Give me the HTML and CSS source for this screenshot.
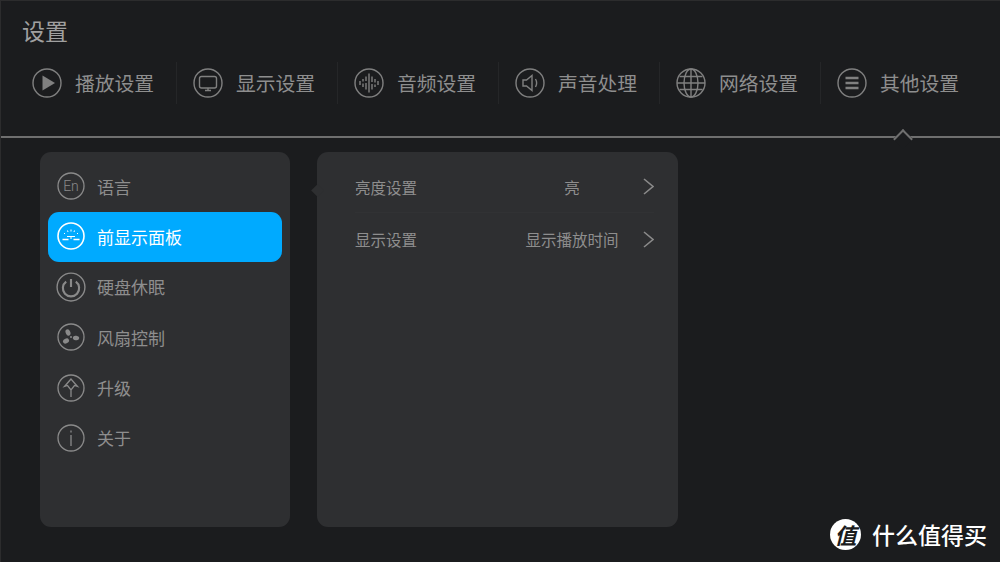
FILE: index.html
```html
<!DOCTYPE html>
<html lang="zh-CN">
<head>
    <meta charset="UTF-8">
    <title>设置</title>
    <link rel="stylesheet" href="styles.css">
</head>
<body>
    <div class="screen">
        <div class="header">
            <h1 class="title">设置</h1>
            <div class="tabs">
                <div class="tab">
                    <svg class="tab-icon" viewBox="0 0 30 30"><circle cx="15" cy="15" r="14"/><path class="solid" d="M10.5 7.5 L23 15 L10.5 22.5 Z"/></svg>
                    <span>播放设置</span>
                </div>
                <div class="tab">
                    <svg class="tab-icon" viewBox="0 0 30 30"><circle cx="15" cy="15" r="14"/><rect x="6.5" y="8.5" width="17" height="11.5" rx="2"/><path d="M12 22.5 H18 M15 20 V22.5"/></svg>
                    <span>显示设置</span>
                </div>
                <div class="tab">
                    <svg class="tab-icon" viewBox="0 0 30 30"><circle cx="15" cy="15" r="14"/><path d="M6 13 V17 M9 11 V13.5 M9 15.5 V19 M12 8.5 V13 M12 15 V21.5 M15 5.5 V24.5 M18 8.5 V14 M18 16 V21.5 M21 11 V14.5 M21 16.5 V19 M24 13 V17"/></svg>
                    <span>音频设置</span>
                </div>
                <div class="tab">
                    <svg class="tab-icon" viewBox="0 0 30 30"><circle cx="15" cy="15" r="14"/><path d="M8 12 H11.5 L17 7.5 V22.5 L11.5 18 H8 Z M20.5 11 Q22.8 15 20.5 19"/></svg>
                    <span>声音处理</span>
                </div>
                <div class="tab">
                    <svg class="tab-icon" viewBox="0 0 30 30"><circle cx="15" cy="15" r="14"/><ellipse cx="15" cy="15" rx="7" ry="14"/><path d="M15 1 V29 M1 15 H29 M3.5 8.5 H26.5 M3.5 21.5 H26.5"/></svg>
                    <span>网络设置</span>
                </div>
                <div class="tab tab-active">
                    <svg class="tab-icon" viewBox="0 0 30 30"><circle cx="15" cy="15" r="14"/><path class="thick" d="M8.5 10 H21.5 M8.5 15 H21.5 M8.5 20 H21.5"/></svg>
                    <span>其他设置</span>
                </div>
            </div>
        </div>

        <div class="content">
            <div class="panel side-menu">
                <div class="menu-item">
                    <svg class="menu-icon" viewBox="0 0 28 28"><circle cx="14" cy="14" r="13"/><text x="14" y="19" class="icon-text">En</text></svg>
                    <span>语言</span>
                </div>
                <div class="menu-item menu-active">
                    <svg class="menu-icon" viewBox="0 0 28 28"><circle cx="14" cy="14" r="13"/><path class="fine" d="M7 11 L8 12 M10.5 8.5 L11 10 M14 7.5 V9.5 M17.5 8.5 L17 10 M21 11 L20 12 M10 14.5 H18 M14 14.5 V17"/><path d="M5.5 17.5 H11.5 M16.5 17.5 H22.5"/></svg>
                    <span>前显示面板</span>
                </div>
                <div class="menu-item">
                    <svg class="menu-icon menu-icon-lg" viewBox="0 0 28 28"><circle cx="14" cy="14" r="13"/><path class="thick" d="M14 6.5 V14 M9.5 9 A7.6 7.6 0 1 0 18.5 9"/></svg>
                    <span>硬盘休眠</span>
                </div>
                <div class="menu-item">
                    <svg class="menu-icon" viewBox="0 0 28 28"><circle cx="14" cy="14" r="13"/><g class="solid"><ellipse cx="11" cy="9.5" rx="2.3" ry="3.2" transform="rotate(-25 11 9.5)"/><ellipse cx="19" cy="15" rx="3.2" ry="2.3" transform="rotate(10 19 15)"/><ellipse cx="9" cy="18" rx="3.2" ry="2.3" transform="rotate(-30 9 18)"/><circle cx="14" cy="14" r="1"/></g></svg>
                    <span>风扇控制</span>
                </div>
                <div class="menu-item">
                    <svg class="menu-icon" viewBox="0 0 28 28"><circle cx="14" cy="14" r="13"/><path d="M14 5 L7.5 12.5 L10.5 11.5 L14 16 L17.5 11.5 L20.5 12.5 Z M14 16 V23"/></svg>
                    <span>升级</span>
                </div>
                <div class="menu-item">
                    <svg class="menu-icon" viewBox="0 0 28 28"><circle cx="14" cy="14" r="13"/><path d="M14 11 V22 M14 6.5 V8.5"/></svg>
                    <span>关于</span>
                </div>
            </div>

            <div class="panel detail">
                <div class="detail-row">
                    <span class="detail-name">亮度设置</span>
                    <span class="detail-value">亮</span>
                    <svg class="chevron" viewBox="0 0 11 17"><path d="M1 1 L10 8.5 L1 16"/></svg>
                </div>
                <div class="detail-row">
                    <span class="detail-name">显示设置</span>
                    <span class="detail-value">显示播放时间</span>
                    <svg class="chevron" viewBox="0 0 11 17"><path d="M1 1 L10 8.5 L1 16"/></svg>
                </div>
            </div>
        </div>

        <!-- watermark -->
        <div class="watermark">
            <span class="wm-logo">值</span>
            <span class="wm-text">什么值得买</span>
        </div>
    </div>
</body>
</html>
```

FILE: styles.css
```css
* {
    box-sizing: border-box;
}

body {
    margin: 0;
    background: #1b1c1e;
    font-family: 'Noto Sans CJK SC', 'Noto Sans', sans-serif;
}

.screen {
    position: relative;
    width: 1000px;
    height: 562px;
    overflow: hidden;
    background: #1b1c1e;
    border-top: 1px solid #2c2c2d;
    border-left: 1px solid #2c2c2d;
    color: #8e8e8e;
}

/* Header */
.header {
    height: 137px;
    padding: 14px 0 0 15px;
    border-bottom: 2px solid #6f6f6f;
}

.title {
    margin: 0 0 0 6px;
    font-size: 23px;
    font-weight: 400;
    line-height: 30px;
    color: #a0a0a0;
}

.tabs {
    display: flex;
    margin-top: 17px;
}

.tab {
    position: relative;
    display: flex;
    align-items: center;
    gap: 13px;
    width: 161px;
    height: 42px;
    padding-left: 16px;
    font-size: 19.8px;
    border-right: 1px solid #252628;
}

.tab span {
    margin-bottom: 2px;
}

.tab:last-child {
    border-right: none;
}

.tab-icon {
    width: 30px;
    height: 30px;
    flex-shrink: 0;
    fill: none;
    stroke: #808080;
    stroke-width: 1.4;
}

.tab-icon .solid {
    fill: #808080;
    stroke: none;
}

.tab-icon .thick {
    stroke-width: 2.4;
}

/* caret on the header line under the active tab */
.tab-active::after {
    content: "";
    position: absolute;
    left: 75px;
    top: 70px;
    width: 12px;
    height: 12px;
    background: #1b1c1e;
    border-top: 2px solid #6f6f6f;
    border-left: 2px solid #6f6f6f;
    transform: rotate(45deg);
}

/* Panels */
.content {
    display: flex;
    gap: 27px;
    padding: 14px 0 0 39px;
}

.panel {
    position: relative;
    height: 375px;
    background: #2e2f31;
    border-radius: 11px;
}

.side-menu {
    width: 250px;
    padding: 10px 8px;
}

.menu-item {
    display: flex;
    align-items: center;
    gap: 12px;
    height: 50px;
    margin-bottom: 0.4px;
    padding: 0 0 2px 9px;
    font-size: 17px;
    border-radius: 11px;
}

.menu-active {
    background: #00aaff;
    color: #fff;
}

.menu-icon {
    width: 28px;
    height: 28px;
    flex-shrink: 0;
    fill: none;
    stroke: #8a8a8a;
    stroke-width: 1.3;
}

.menu-icon-lg {
    width: 30px;
    height: 30px;
    margin: 0 -1px;
}

.menu-icon .solid {
    fill: #8a8a8a;
    stroke: none;
}

.menu-icon .thick {
    stroke-width: 2;
}

.icon-text {
    font-family: 'Roboto', sans-serif;
    font-size: 14px;
    font-weight: 300;
    text-anchor: middle;
    fill: #8a8a8a;
    stroke: none;
}

.menu-active .menu-icon {
    stroke: #fff;
    stroke-width: 1.6;
}

.menu-active .menu-icon .fine {
    stroke-width: 1;
}

.detail {
    width: 361px;
    padding: 9px 24px 0 38px;
}

/* little tip pointing back at the menu */
.detail::before {
    content: "";
    position: absolute;
    left: -4px;
    top: 34px;
    width: 9px;
    height: 9px;
    background: #2e2f31;
    transform: rotate(45deg);
}

.detail-row {
    display: flex;
    align-items: center;
    height: 52px;
    font-size: 15.5px;
    border-bottom: 1px solid #313234;
}

.detail-row:last-child {
    border-bottom: none;
}

.detail-name {
    width: 152px;
}

.detail-value {
    width: 130px;
    text-align: center;
    white-space: nowrap;
}

.chevron {
    width: 11px;
    height: 17px;
    margin-left: 6px;
    fill: none;
    stroke: #8a8a8a;
    stroke-width: 1.6;
}

/* Watermark */
.watermark {
    position: absolute;
    left: 829px;
    top: 518px;
    display: flex;
    align-items: center;
    gap: 11px;
}

.wm-logo {
    width: 31px;
    height: 31px;
    border-radius: 50%;
    background: #fff;
    color: #1b1c1e;
    font-size: 22px;
    font-style: italic;
    font-weight: 700;
    line-height: 31px;
    text-align: center;
}

.wm-text {
    font-size: 23px;
    font-weight: 500;
    line-height: 31px;
    color: #fff;
}
```
